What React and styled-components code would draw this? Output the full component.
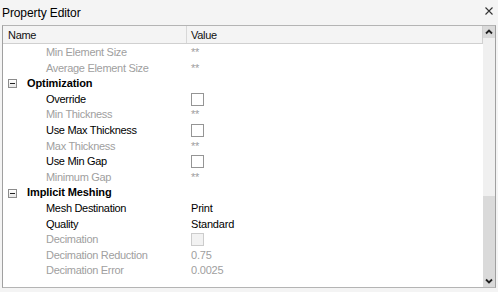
import React from "react";
import styled, { createGlobalStyle } from "styled-components";

const GlobalStyle = createGlobalStyle`
  html, body {
    margin: 0;
    padding: 0;
    background: #f4f4f4;
  }
  body {
    font-family: "Liberation Sans", Arial, sans-serif;
    font-size: 11px;
    color: #000;
  }
`;

const ROW_H = 15.6;

const Window = styled.div`
  width: 498px;
  height: 292px;
  display: flex;
  flex-direction: column;
  background: #f4f4f4;
`;

const TitleBar = styled.div`
  height: 25px;
  display: flex;
  align-items: center;
  justify-content: space-between;
  padding: 0 5px 0 2px;
  box-sizing: border-box;
`;

const Title = styled.div`
  font-size: 12px;
  letter-spacing: -0.1px;
  padding-top: 1px;
`;

const CloseButton = styled.div`
  width: 8px;
  height: 8px;
  margin-bottom: 3px;
  display: flex;
`;

const Panel = styled.div`
  margin-left: 2px;
  width: 494px;
  height: 263px;
  box-sizing: border-box;
  border: 1px solid #b4b4b4;
  border-left-color: #a0a0a0;
  border-right-color: #a0a0a0;
  display: flex;
  background: #fff;
`;

const Content = styled.div`
  flex: 1;
  display: flex;
  flex-direction: column;
  overflow: hidden;
`;

const HeaderRow = styled.div`
  height: 17px;
  flex-shrink: 0;
  display: grid;
  grid-template-columns: 184px 1fr;
  background: #f4f4f4;
  border-bottom: 1px solid #d0d0d0;
  border-right: 1px solid #d0d0d0;
`;

const HeaderCell = styled.div`
  display: flex;
  align-items: center;
  padding-left: ${(p) => p.$pad}px;
  letter-spacing: -0.3px;
  color: #111;
  border-right: ${(p) => (p.$divider ? "1px solid #d8d8d8" : "none")};
`;

const Body = styled.div`
  flex: 1;
  display: flex;
  flex-direction: column;
  padding-top: 1px;
`;

const Row = styled.div`
  height: ${ROW_H}px;
  flex-shrink: 0;
  display: grid;
  grid-template-columns: 185px 1fr;
  align-items: center;
  line-height: ${ROW_H}px;
`;

const SectionCell = styled.div`
  display: flex;
  align-items: center;
  padding-left: 5px;
  gap: 10px;
  font-weight: bold;
  letter-spacing: -0.1px;
  white-space: nowrap;
`;

const Expander = styled.div`
  width: 9px;
  height: 9px;
  box-sizing: border-box;
  border: 1px solid #8c8c8c;
  background: linear-gradient(#ffffff, #e6e6e6);
  display: flex;
  align-items: center;
  justify-content: center;

  &::after {
    content: "";
    width: 5px;
    height: 1px;
    background: #222;
  }
`;

const NameCell = styled.div`
  padding-left: 43px;
  letter-spacing: -0.3px;
  white-space: nowrap;
  color: ${(p) => (p.$disabled ? "#a0a0a0" : "#000")};
`;

const ValueCell = styled.div`
  padding-left: 3px;
  display: flex;
  align-items: center;
  letter-spacing: -0.2px;
  color: ${(p) => (p.$disabled ? "#a0a0a0" : "#000")};
`;

const Checkbox = styled.div`
  width: 13px;
  height: 13px;
  box-sizing: border-box;
  border: 1px solid ${(p) => (p.$disabled ? "#cccccc" : "#959595")};
  background: ${(p) => (p.$disabled ? "#f2f2f2" : "#fff")};
`;

const ScrollBar = styled.div`
  width: 12px;
  flex-shrink: 0;
  display: flex;
  flex-direction: column;
  background: #f0f0f0;
`;

const ScrollButton = styled.div`
  height: 12px;
  display: flex;
  align-items: center;
  justify-content: center;
  background: ${(p) => (p.$filled ? "#dadada" : "transparent")};
`;

const Track = styled.div`
  flex: 1;
  display: flex;
  flex-direction: column;
`;

const TrackGap = styled.div`
  height: 158px;
`;

const Thumb = styled.div`
  flex: 1;
  background: #dadada;
  display: flex;
  flex-direction: column;
  justify-content: flex-end;
`;

const Chevron = ({ down }) => (
  <svg width="8" height="6" viewBox="0 0 8 6">
    <polyline
      points={down ? "1,1.5 4,4.5 7,1.5" : "1,4.5 4,1.5 7,4.5"}
      fill="none"
      stroke="#222"
      strokeWidth="1.8"
    />
  </svg>
);

const items = [
  { name: "Min Element Size", value: "**", disabled: true },
  { name: "Average Element Size", value: "**", disabled: true },
  { section: "Optimization" },
  { name: "Override", check: true },
  { name: "Min Thickness", value: "**", disabled: true },
  { name: "Use Max Thickness", check: true },
  { name: "Max Thickness", value: "**", disabled: true },
  { name: "Use Min Gap", check: true },
  { name: "Minimum Gap", value: "**", disabled: true },
  { section: "Implicit Meshing" },
  { name: "Mesh Destination", value: "Print" },
  { name: "Quality", value: "Standard" },
  { name: "Decimation", check: true, disabled: true },
  { name: "Decimation Reduction", value: "0.75", disabled: true },
  { name: "Decimation Error", value: "0.0025", disabled: true },
];

export default function App() {
  return (
    <Window>
      <GlobalStyle />
      <TitleBar>
        <Title>Property Editor</Title>
        <CloseButton>
          <svg width="8" height="8" viewBox="0 0 8 8">
            <path d="M0.5 0.5 L7.5 7.5 M7.5 0.5 L0.5 7.5" stroke="#333" strokeWidth="1.1" />
          </svg>
        </CloseButton>
      </TitleBar>
      <Panel>
        <Content>
          <HeaderRow>
            <HeaderCell $pad={5} $divider>
              Name
            </HeaderCell>
            <HeaderCell $pad={4}>Value</HeaderCell>
          </HeaderRow>
          <Body>
            {items.map((it, i) =>
              it.section ? (
                <Row key={i}>
                  <SectionCell>
                    <Expander />
                    {it.section}
                  </SectionCell>
                </Row>
              ) : (
                <Row key={i}>
                  <NameCell $disabled={it.disabled}>{it.name}</NameCell>
                  <ValueCell $disabled={it.disabled}>
                    {it.check ? <Checkbox $disabled={it.disabled} /> : it.value}
                  </ValueCell>
                </Row>
              )
            )}
          </Body>
        </Content>
        <ScrollBar>
          <ScrollButton $filled>
            <Chevron />
          </ScrollButton>
          <Track>
            <TrackGap />
            <Thumb>
              <ScrollButton>
                <Chevron down />
              </ScrollButton>
            </Thumb>
          </Track>
        </ScrollBar>
      </Panel>
    </Window>
  );
}
